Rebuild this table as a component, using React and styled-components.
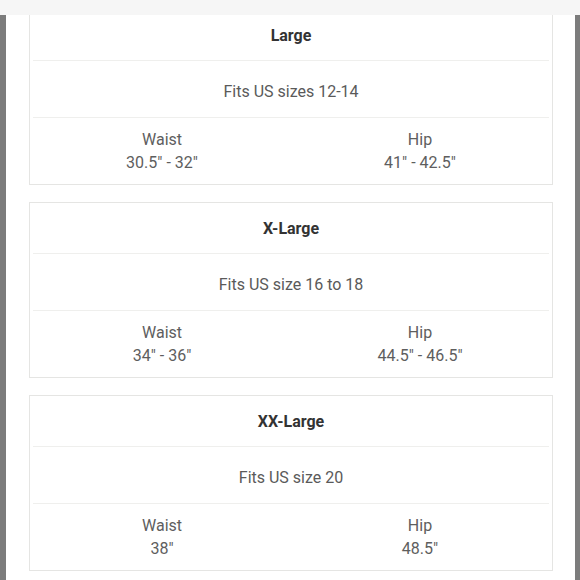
import React from 'react';
import styled, { createGlobalStyle } from 'styled-components';

const GlobalStyle = createGlobalStyle`
  html, body {
    margin: 0;
    padding: 0;
    background: #ffffff;
  }
  body {
    font-family: Roboto, "Liberation Sans", Arial, sans-serif;
  }
`;

const Page = styled.div`
  width: 580px;
  height: 580px;
  display: flex;
  flex-direction: column;
  overflow: hidden;
  background: #fff;
`;

const TopStrip = styled.div`
  height: 15px;
  flex-shrink: 0;
  background: #f6f6f6;
`;

const Frame = styled.div`
  flex: 1;
  overflow: hidden;
  border-left: 6px solid #7c7c7c;
  border-right: 5px solid #7c7c7c;
  background: #fff;
`;

const CardList = styled.div`
  display: flex;
  flex-direction: column;
  gap: 17px;
  margin-top: -6px;
  padding: 0 22px 0 23px;
`;

const Card = styled.div`
  border: 1px solid #e5e5e3;
  background: #fff;
  display: flex;
  flex-direction: column;
`;

const Row = styled.div`
  height: ${(p) => p.h}px;
  display: flex;
  align-items: center;
  justify-content: center;
  margin: 0 3px;
  padding-top: ${(p) => p.shift || 0}px;
  border-top: ${(p) => (p.first ? 'none' : '1px solid #efefed')};
  box-sizing: border-box;
`;

const Title = styled.div`
  font-size: 16px;
  font-weight: 700;
  color: #333;
`;

const Fits = styled.div`
  font-size: 16px;
  color: #5a5a5a;
`;

const Columns = styled.div`
  display: grid;
  grid-template-columns: 1fr 1fr;
  width: 100%;
`;

const Measure = styled.div`
  display: flex;
  flex-direction: column;
  align-items: center;
  gap: 5px;
  font-size: 16px;
  color: #5e5e5e;
  line-height: 18px;
`;

const sizes = [
  { name: 'Large', fits: 'Fits US sizes 12-14', waist: '30.5" - 32"', hip: '41" - 42.5"' },
  { name: 'X-Large', fits: 'Fits US size 16 to 18', waist: '34" - 36"', hip: '44.5" - 46.5"' },
  { name: 'XX-Large', fits: 'Fits US size 20', waist: '38"', hip: '48.5"' },
];

function SizeCard({ size }) {
  return (
    <Card>
      <Row h={50} first>
        <Title>{size.name}</Title>
      </Row>
      <Row h={57} shift={4}>
        <Fits>{size.fits}</Fits>
      </Row>
      <Row h={67}>
        <Columns>
          <Measure>
            <span>Waist</span>
            <span>{size.waist}</span>
          </Measure>
          <Measure>
            <span>Hip</span>
            <span>{size.hip}</span>
          </Measure>
        </Columns>
      </Row>
    </Card>
  );
}

export default function App() {
  return (
    <>
      <GlobalStyle />
      <Page>
        <TopStrip />
        <Frame>
          <CardList>
            {sizes.map((s) => (
              <SizeCard key={s.name} size={s} />
            ))}
          </CardList>
        </Frame>
      </Page>
    </>
  );
}
